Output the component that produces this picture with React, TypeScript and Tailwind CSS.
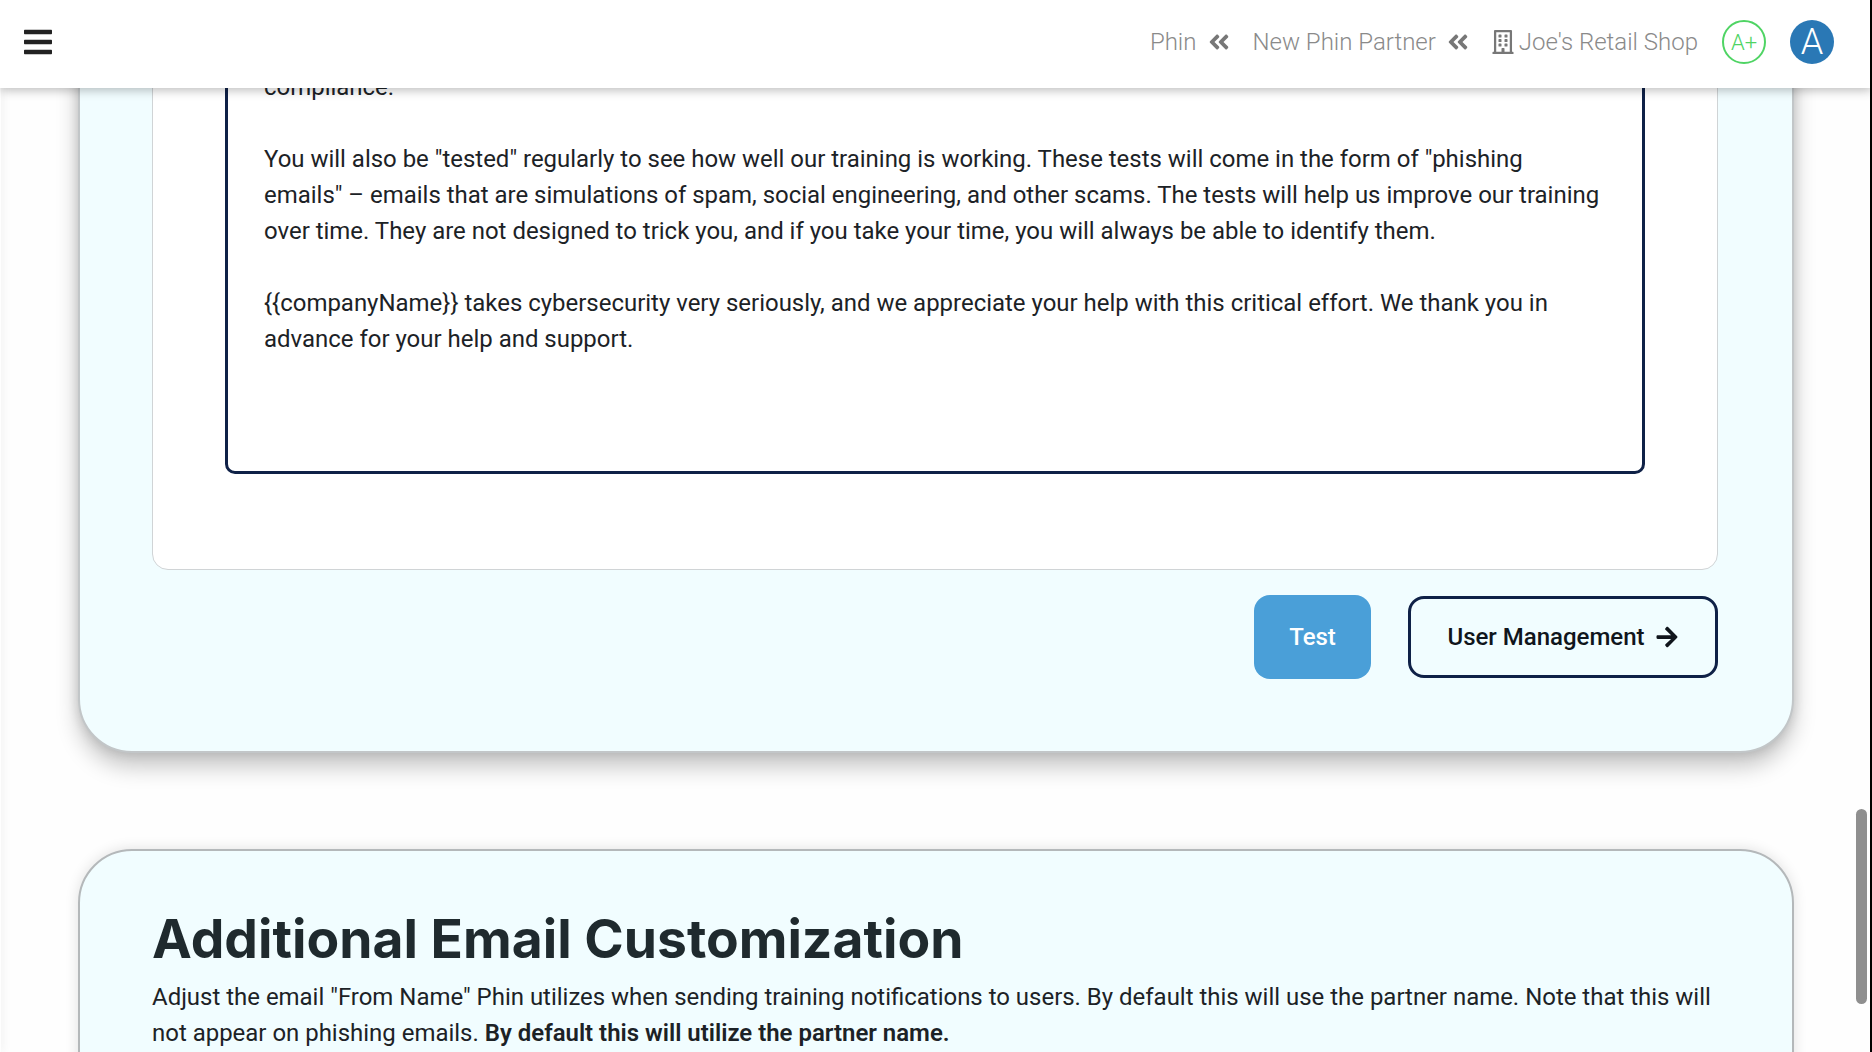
import { FaAngleDoubleLeft, FaArrowRight, FaBars, FaRegBuilding } from 'react-icons/fa'

function TopBar() {
  return (
    <header className="relative z-10 flex h-[88px] shrink-0 items-center justify-between bg-white pb-1 pl-[22px] pr-[38px] shadow-[0_2px_10px_rgba(0,0,0,0.28)]">
      <FaBars size={32} className="text-[#222]" />
      <div className="flex items-center text-[24px] font-light text-[#8a8a8a]">
        <span>Phin</span>
        <FaAngleDoubleLeft size={24} className="ml-[11px] text-[#777]" />
        <span className="ml-[21px]">New Phin Partner</span>
        <FaAngleDoubleLeft size={24} className="ml-[10px] text-[#777]" />
        <FaRegBuilding size={24} className="ml-[21px] text-[#777]" />
        <span className="ml-1">Joe's Retail Shop</span>
        <div className="ml-6 flex h-[44px] w-[44px] items-center justify-center rounded-full border-2 border-[#4fd464] text-[22px] text-[#4fd464]">A+</div>
        <div className="ml-6 flex h-[44px] w-[44px] items-center justify-center rounded-full bg-[#2a78b5] text-[36px] text-white">A</div>
      </div>
    </header>
  )
}

function EmailEditor() {
  return (
    <div className="rounded-[10px] border-[3px] border-[#0f2147] bg-white pl-[36px] pr-[36px] pt-[37px] pb-[114px] text-[23.96px] leading-[36px] text-[#1c2226]">
      <p>compliance.</p>
      <p className="mt-[36px]">
        You will also be "tested" regularly to see how well our training is working. These tests will come in the form of "phishing emails" – emails that are simulations of spam, social engineering, and other scams. The tests will help us improve our training over time. They are not designed to trick you, and if you take your time, you will always be able to identify them.
      </p>
      <p className="mt-[36px]">
        {'{{companyName}}'} takes cybersecurity very seriously, and we appreciate your help with this critical effort. We thank you in advance for your help and support.
      </p>
    </div>
  )
}

export default function App() {
  return (
    <div className="relative flex h-screen w-full flex-col overflow-hidden bg-[#fefefe] font-['Roboto',sans-serif]">
      <TopBar />

      {/* sidebar edge shadow */}
      <div className="absolute bottom-0 left-0 top-0 w-[1px] shadow-[0_0_8px_rgba(0,0,0,0.3)]" />

      <main className="flex-1 overflow-hidden">
        <div className="-mt-[142px] flex flex-col gap-[96px] pl-[78px] pr-[78px]">
          {/* Welcome email card */}
          <section className="rounded-[54px] border-2 border-[#c2c6c8] bg-[#f1fdff] pb-[72px] pl-[72px] pr-[74px] pt-[40px] shadow-[0_14px_22px_rgba(0,0,0,0.22),0_0_12px_rgba(0,0,0,0.14)]">
            <div className="rounded-[16px] border border-[#d0d4d6] bg-white px-[72px] pb-[95px] pt-[40px]">
              <EmailEditor />
            </div>
            <div className="mt-[25px] flex items-center justify-end gap-[37px]">
              <button className="flex h-[84px] w-[117px] items-center justify-center rounded-[16px] bg-[#4a9fd8] text-[24px] font-medium text-white">Test</button>
              <button className="flex h-[82px] w-[310px] items-center justify-center gap-[10px] rounded-[16px] border-[3px] border-[#0f2147] text-[24px] font-medium text-[#10151c]">
                User Management
                <FaArrowRight size={24} />
              </button>
            </div>
          </section>

          {/* Additional customization card */}
          <section className="rounded-[54px] border-2 border-[#b4b8ba] bg-[#f1fdff] pb-[60px] pl-[72px] pr-[74px] pt-[57px] shadow-[0_0_14px_rgba(0,0,0,0.12)]">
            <h2 className="font-['Inter',sans-serif] text-[53.4px] font-bold leading-[62px] text-[#1f2a2e]">Additional Email Customization</h2>
            <p className="mt-[9px] text-[23.96px] leading-[36px] text-[#1c2226]">
              Adjust the email "From Name" Phin utilizes when sending training notifications to users. By default this will use the partner name. Note that this will not appear on phishing emails. <span className="font-semibold">By default this will utilize the partner name.</span>
            </p>
          </section>
        </div>
      </main>

      {/* scrollbar thumb */}
      <div className="absolute right-[5px] top-[809px] z-20 h-[195px] w-[11px] rounded-full bg-[#8f8f8f]" />
      <div className="absolute bottom-0 right-0 top-0 z-20 w-[2px] bg-black" />
    </div>
  )
}
